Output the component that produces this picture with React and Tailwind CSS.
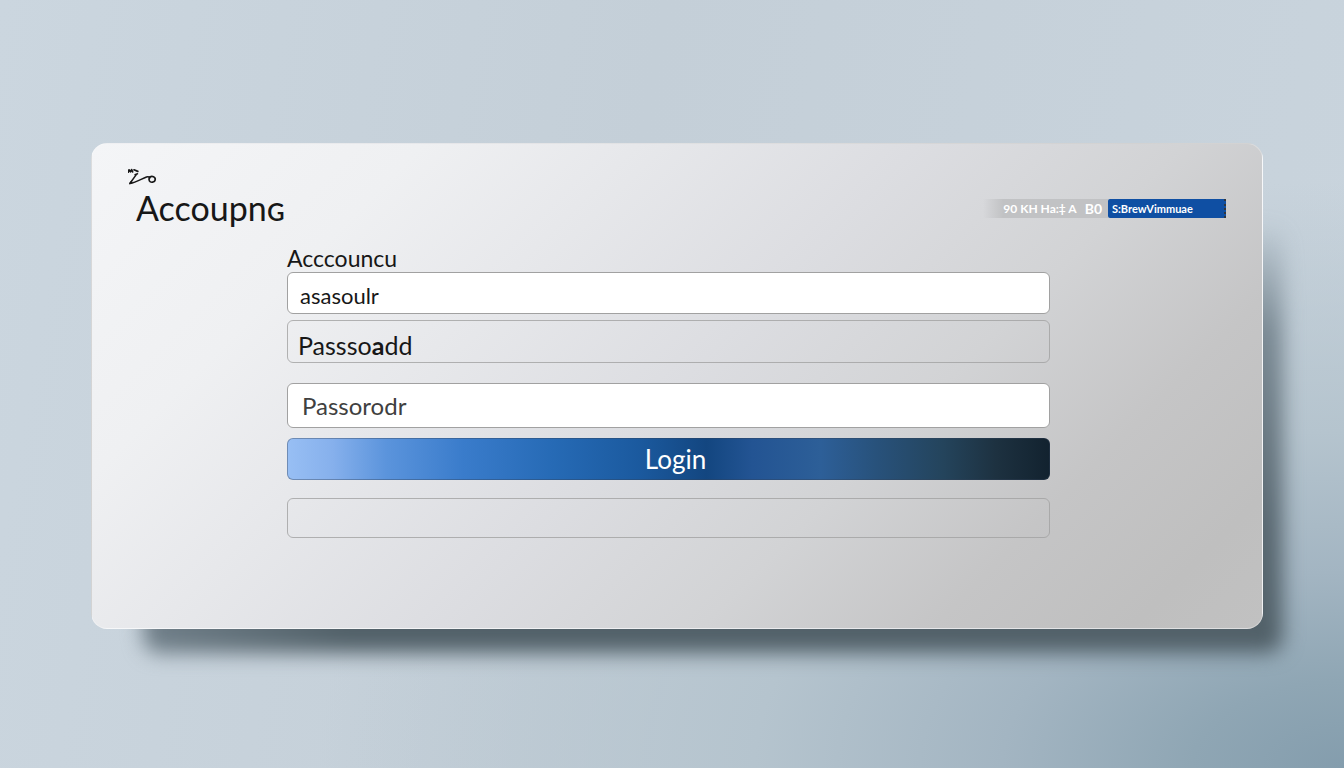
import React from "react";

function Mark() {
  return (
    <svg viewBox="0 0 32 20" className="h-5 w-8" fill="none" stroke="#171717" strokeWidth="1.5" strokeLinecap="round" strokeLinejoin="round" aria-hidden="true">
      <path d="M.2 4.200 1 1.800l1.400 2L3.600 1.600l1 2.200M6 1.800l3.800 1.600" strokeWidth="1.700" />
      <path d="M9.500 5.800 7 6.800M8.300 6.600 2 15.200" />
      <path d="M1.800 15.600 3.500 13.500M2 15.600C8 14 13 11.200 18.500 9c1.500-.3 3 .2 3.500.7" />
      <path d="M21.600 9.200c2.500-1.500 6-.5 5.600 2.600-.4 2.700-4.600 3.300-5.800 1.100-.7-1.400-.4-2.700.2-3.700" strokeWidth="1.700" />
    </svg>
  );
}

export default function App() {
  return (
    <main className="flex min-h-screen items-center bg-[radial-gradient(ellipse_at_100%_100%,#849dad_0%,#8fa6b4_8%,#a3b5c2_18%,#b5c4ce_31%,transparent_54%),linear-gradient(100deg,#cbd6df_0%,#c4cfd8_45%,#c9d4dd_100%)] pt-[52px] pr-[81px] pb-12 pl-[91px] font-['Lato','Noto_Sans',sans-serif] text-neutral-900">
      <div className="relative isolate w-full">
        <div className="absolute -right-5 -bottom-6 left-[52px] top-20 -z-10 rounded-2xl bg-[linear-gradient(90deg,#71808a_0%,transparent_18%),linear-gradient(180deg,transparent_0%,#7b8a94_25%,#5a6972_70%,#505f67_100%)] blur-[10px]" />
        <section className="rounded-2xl border border-white/30 bg-[linear-gradient(135deg,#f4f5f7_0%,#eff0f2_20%,#e7e8eb_33%,#dcdde1_50%,#d2d3d5_66%,#c5c5c6_80%,#bfbfbf_92%,#c1c1c1_100%)] px-9 pt-6 pb-[90px]">
          <Mark />
          <header className="flex items-center justify-between">
            <h1 className="pl-2 text-[34px] leading-10">Accoupnɢ</h1>
            <nav className="flex h-[19px] items-stretch text-[11px] leading-[19px] font-bold text-white">
              <a href="#help" className="bg-gradient-to-r from-transparent to-[#c1c2c4] to-20% pr-2 pl-5 text-xs leading-[19px]">90 KH Ha:‡ A</a>
              <a href="#mode" className="bg-[#c1c2c4] pr-1.5 text-sm leading-[19px]">B0</a>
              <a href="#register" className="w-[118px] rounded-l-xs border-r-2 border-dotted border-[#30363d] bg-[#0f4fa3] pl-1">S:BrewVimmuae</a>
            </nav>
          </header>
          <form className="flex flex-col pt-4 pr-[176px] pl-[159px]" onSubmit={(e) => e.preventDefault()}>
            <label htmlFor="account" className="text-[23px] leading-7">Acccouncu</label>
            <input id="account" defaultValue="asasoulr" className="h-[42px] rounded-md border border-neutral-400 bg-white px-3 pt-1 text-[22px]" />
            <label htmlFor="password" className="mt-1.5 h-[43px] rounded-md border border-neutral-400/80 px-2.5 text-[25px] leading-[48px]">
              Passso<b>a</b>dd
            </label>
            <input id="password" defaultValue="Passorodr" className="mt-5 h-[45px] rounded-md border border-neutral-400 bg-white px-3.5 text-2xl text-neutral-700" />
            <button className="mt-2.5 h-[42px] rounded-md border border-slate-700/40 bg-[linear-gradient(90deg,#98bff4_0%,#86b0ec_6%,#5b94dc_13%,#3a7ccb_23%,#266ab5_35%,#1b5a9f_46%,#134680_55%,#235493_61%,#2d5f98_70%,#28527c_77%,#24445c_86%,#1d3140_93%,#12222f_100%)] bg-origin-border pl-3.5 text-[26px] leading-10 text-white">Login</button>
            <input aria-label="Message" className="mt-[18px] h-10 rounded-md border border-neutral-400/80 px-3" />
          </form>
        </section>
      </div>
    </main>
  );
}
